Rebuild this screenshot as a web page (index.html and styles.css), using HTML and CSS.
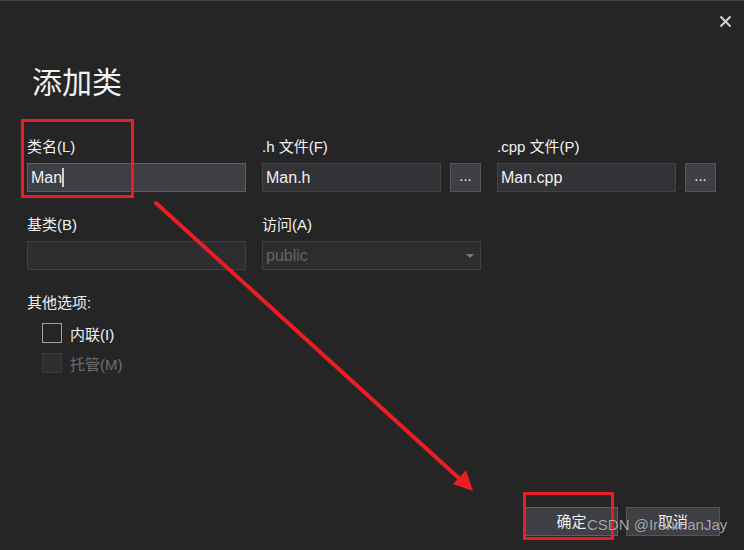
FILE: index.html
```html
<!DOCTYPE html>
<html lang="zh-CN">
<head>
<meta charset="utf-8">
<title>添加类</title>
<link rel="stylesheet" href="styles.css">
</head>
<body>
<div class="dialog">
  <div class="titlebar">
    <span class="close" aria-label="关闭">
      <svg width="13" height="13" viewBox="0 0 13 13"><path d="M1.5 1.5 L11.5 11.5 M11.5 1.5 L1.5 11.5" stroke="#d4d4d4" stroke-width="2" fill="none"/></svg>
    </span>
  </div>
  <div class="content">
    <h1 class="title">添加类</h1>
    <div class="grid">
      <div class="field">
        <div class="label">类名(L)</div>
        <div class="input focused">Man<span class="caret"></span></div>
      </div>
      <div class="field">
        <div class="label">.h 文件(F)</div>
        <div class="row">
          <div class="input">Man.h</div>
          <div class="browse">...</div>
        </div>
      </div>
      <div class="field">
        <div class="label">.cpp 文件(P)</div>
        <div class="row">
          <div class="input">Man.cpp</div>
          <div class="browse">...</div>
        </div>
      </div>
      <div class="field">
        <div class="label">基类(B)</div>
        <div class="input disabled"></div>
      </div>
      <div class="field">
        <div class="label">访问(A)</div>
        <div class="input disabled select">public<span class="arrow"></span></div>
      </div>
    </div>
    <div class="options-label">其他选项:</div>
    <div class="options">
      <div class="check"><span class="box"></span><span>内联(I)</span></div>
      <div class="check off"><span class="box"></span><span>托管(M)</span></div>
    </div>
    <div class="footer">
      <div class="btn primary">确定</div>
      <div class="btn">取消</div>
    </div>
  </div>
</div>
<div class="mark mark-name"></div>
<div class="mark mark-ok"></div>
<svg class="annot" width="744" height="550" viewBox="0 0 744 550">
  <line x1="156" y1="203" x2="462" y2="481" stroke="#ea1c24" stroke-width="4" stroke-linecap="round"/>
  <polygon points="473,491 453,484 459,478 466,470" fill="#ea1c24"/>
</svg>
<div class="watermark">CSDN @IronmanJay</div>
</body>
</html>
```
FILE: styles.css
```css
html, body {
  margin: 0;
  padding: 0;
}
body {
  width: 744px;
  height: 550px;
  overflow: hidden;
  position: relative;
  background: #252526;
  color: #f1f1f1;
  font-family: "Liberation Sans", "Noto Sans CJK SC", sans-serif;
  font-size: 15px;
}
.dialog {
  height: 550px;
  box-sizing: border-box;
  border-top: 1px solid #45454a;
  display: flex;
  flex-direction: column;
}
.titlebar {
  display: flex;
  justify-content: flex-end;
  padding: 14px 12px 0 0;
  height: 30px;
}
.close svg { display: block; }
.content {
  flex: 1;
  display: flex;
  flex-direction: column;
  padding: 0 24px 14px 27px;
}
.title {
  margin: 20px 0 0 5px;
  font-size: 30px;
  font-weight: normal;
  line-height: 36px;
  color: #f1f1f1;
}
.grid {
  margin-top: 36px;
  display: grid;
  grid-template-columns: 219px 219px 219px;
  column-gap: 16px;
  row-gap: 23px;
}
.label {
  height: 20px;
  line-height: 20px;
  margin-bottom: 6px;
  color: #f1f1f1;
}
.row {
  display: flex;
  gap: 9px;
}
.input {
  flex: 1;
  height: 29px;
  box-sizing: border-box;
  border: 1px solid #434346;
  background: #333337;
  padding: 0 3px;
  font-size: 16px;
  line-height: 27px;
  color: #f1f1f1;
  position: relative;
}
.input.focused {
  border-color: #007acc;
  background: #3f3f46;
}
.caret {
  display: inline-block;
  width: 2px;
  height: 19px;
  background: #cfcfcf;
  vertical-align: -4px;
  margin-left: 0;
}
.input.disabled {
  background: #2d2d30;
  border-color: #3f3f46;
  color: #656565;
}
.arrow {
  position: absolute;
  right: 6px;
  top: 12px;
  width: 0;
  height: 0;
  border-left: 4px solid transparent;
  border-right: 4px solid transparent;
  border-top: 4px solid #7a7a7a;
}
.browse {
  width: 31px;
  height: 29px;
  box-sizing: border-box;
  border: 1px solid #555558;
  background: #3f3f46;
  text-align: center;
  line-height: 24px;
  font-size: 15px;
  color: #f1f1f1;
}
.options-label {
  margin-top: 23px;
  height: 20px;
  line-height: 20px;
}
.options {
  margin-top: 10px;
  padding-left: 15px;
  display: flex;
  flex-direction: column;
  gap: 10px;
}
.check {
  display: flex;
  align-items: center;
  gap: 8px;
  height: 20px;
  color: #f1f1f1;
}
.check .box {
  width: 20px;
  height: 20px;
  box-sizing: border-box;
  border: 1px solid #a0a0a0;
}
.check.off { color: #6f6f6f; }
.check.off .box {
  border-color: #3a3a3d;
  background: #2d2d30;
}
.footer {
  margin-top: auto;
  display: flex;
  justify-content: flex-end;
  gap: 8px;
}
.btn {
  width: 94px;
  height: 29px;
  box-sizing: border-box;
  border: 1px solid #555558;
  background: #3f3f46;
  text-align: center;
  line-height: 27px;
  font-size: 15px;
  color: #f1f1f1;
}
.btn.primary {
  width: 93px;
  border-color: #007acc;
}
.mark {
  position: absolute;
  border: 3px solid #ea1c24;
  box-sizing: border-box;
}
.mark-name { left: 21px; top: 119px; width: 113px; height: 79px; }
.mark-ok { left: 523px; top: 492px; width: 91px; height: 48px; }
.annot {
  position: absolute;
  left: 0;
  top: 0;
  pointer-events: none;
}
.watermark {
  position: absolute;
  left: 587px;
  top: 515px;
  font-size: 15px;
  line-height: 20px;
  color: rgba(225, 225, 225, 0.72);
  text-shadow: 0 0 1px rgba(0,0,0,0.6);
}
```
